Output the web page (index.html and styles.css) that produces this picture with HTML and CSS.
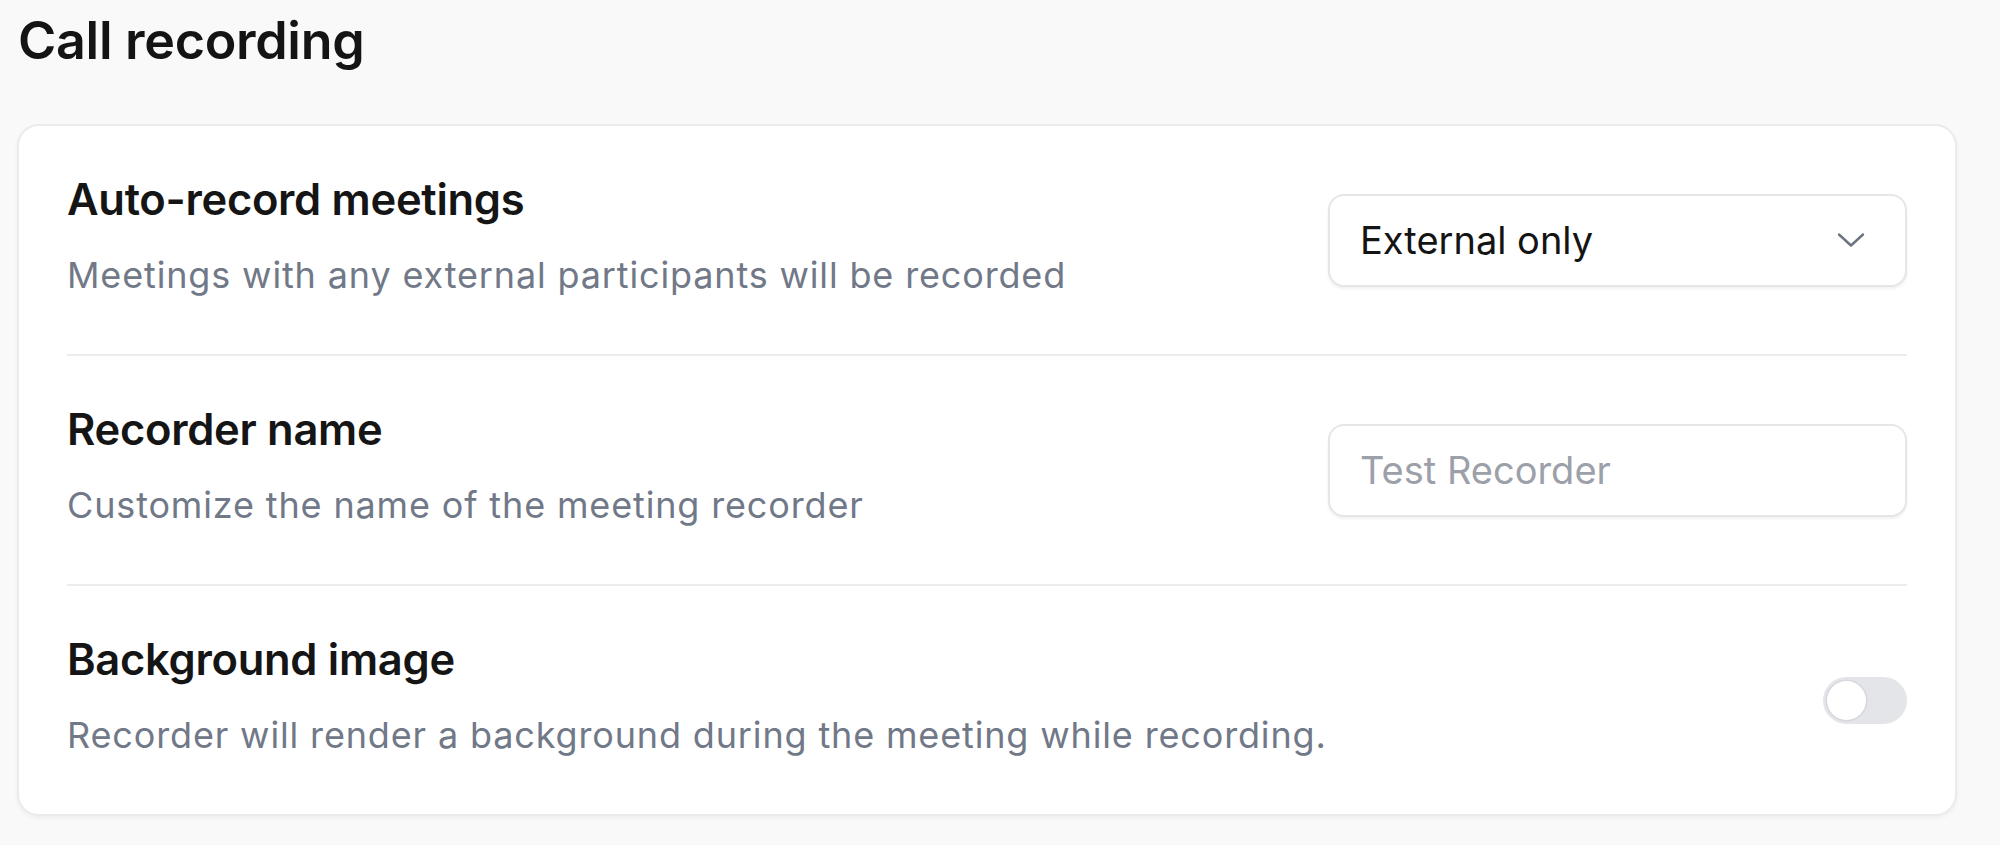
FILE: index.html
```html
<!DOCTYPE html>
<html lang="en">
<head>
<meta charset="utf-8">
<title>Call recording</title>
<link rel="stylesheet" href="styles.css">
</head>
<body>
<div class="page">
  <h1 class="title">Call recording</h1>
  <section class="card">
    <div class="row">
      <div class="text">
        <div class="label">Auto-record meetings</div>
        <div class="desc">Meetings with any external participants will be recorded</div>
      </div>
      <div class="select">
        <span>External only</span>
        <svg class="chev" width="28" height="16" viewBox="0 0 28 16" fill="none"><path d="M2 2.5 L14 13.5 L26 2.5" stroke="#6b7280" stroke-width="2.4" stroke-linecap="round" stroke-linejoin="round"/></svg>
      </div>
    </div>
    <div class="row">
      <div class="text">
        <div class="label">Recorder name</div>
        <div class="desc">Customize the name of the meeting recorder</div>
      </div>
      <div class="input"><span class="placeholder">Test Recorder</span></div>
    </div>
    <div class="row">
      <div class="text">
        <div class="label">Background image</div>
        <div class="desc">Recorder will render a background during the meeting while recording.</div>
      </div>
      <div class="toggle"><span class="knob"></span></div>
    </div>
  </section>
</div>
</body>
</html>
```

FILE: styles.css
```css
* { box-sizing: border-box; }
html, body { margin: 0; padding: 0; }
body {
  background: #f9f9f9;
  font-family: Inter, "Noto Sans", sans-serif;
  color: #111111;
  width: 2000px;
  height: 845px;
  overflow: hidden;
}
.page { padding: 9px 43px 0 17px; }
.title {
  margin: 0 0 51px 1px;
  font-size: 52px;
  line-height: 64px;
  font-weight: 600;
  color: #141414;
  letter-spacing: -0.3px;
}
.card {
  background: #ffffff;
  border: 2px solid #ebebeb;
  border-radius: 22px;
  box-shadow: 0 2px 4px rgba(0,0,0,0.05);
  padding: 0 48px;
}
.row {
  display: flex;
  align-items: center;
  justify-content: space-between;
  border-bottom: 2px solid #ececec;
}
.row:last-child { border-bottom: none; }
.text {
  display: flex;
  flex-direction: column;
  gap: 27px;
  padding: 47px 0 56px;
}
.label {
  font-size: 43.5px;
  line-height: 52px;
  font-weight: 600;
  color: #151515;
  letter-spacing: -0.3px;
}
.desc {
  font-size: 36px;
  line-height: 46px;
  color: #717887;
  letter-spacing: 0.85px;
}
.select, .input {
  width: 579px;
  height: 93px;
  border: 2px solid #e6e6e6;
  border-radius: 16px;
  box-shadow: 0 2px 3px rgba(0,0,0,0.06);
  display: flex;
  align-items: center;
  justify-content: space-between;
  padding: 0 40px 0 30px;
  font-size: 38px;
  background: #fff;
}
.select span { color: #141414; }
.placeholder { color: #9ca0a8; }
.toggle {
  width: 84px;
  height: 47px;
  border-radius: 24px;
  background: #e3e5e9;
  padding: 4px;
  display: flex;
  align-items: center;
}
.knob {
  width: 39px;
  height: 39px;
  border-radius: 50%;
  background: #fff;
  box-shadow: 0 0 0 1.5px #d5d7db;
}
```
